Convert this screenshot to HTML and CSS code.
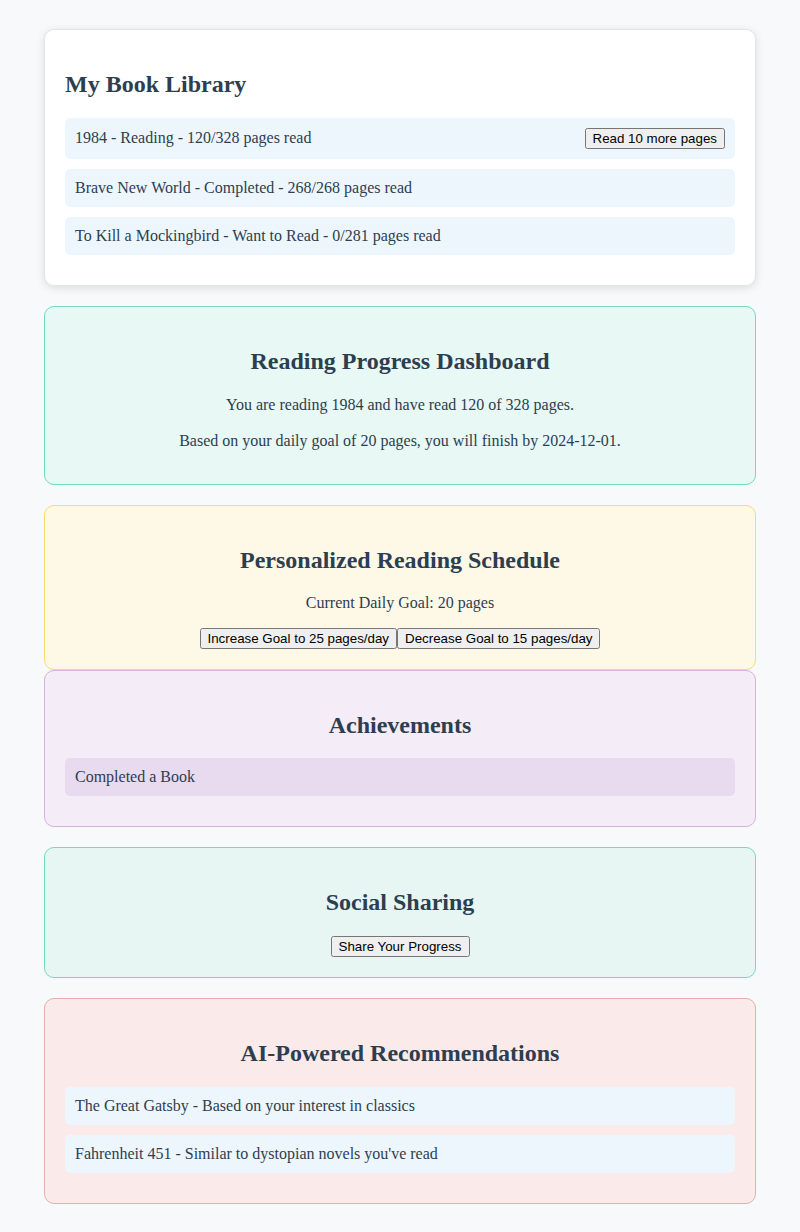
FILE: index.html
```html
<!DOCTYPE html>
<html lang="en">
<head>
<meta charset="utf-8">
<title>Book Tracker</title>
<link rel="stylesheet" href="styles.css">
</head>
<body>
<main class="app">
  <section class="card card-library">
    <h2>My Book Library</h2>
    <div class="item item-row"><span>1984 - Reading - 120/328 pages read</span><button>Read 10 more pages</button></div>
    <div class="item">Brave New World - Completed - 268/268 pages read</div>
    <div class="item">To Kill a Mockingbird - Want to Read - 0/281 pages read</div>
  </section>
  <section class="card card-dashboard center">
    <h2>Reading Progress Dashboard</h2>
    <p>You are reading 1984 and have read 120 of 328 pages.</p>
    <p>Based on your daily goal of 20 pages, you will finish by 2024-12-01.</p>
  </section>
  <section class="card card-schedule center">
    <h2>Personalized Reading Schedule</h2>
    <p>Current Daily Goal: 20 pages</p>
    <button>Increase Goal to 25 pages/day</button><button>Decrease Goal to 15 pages/day</button>
  </section>
  <section class="card card-achieve center">
    <h2>Achievements</h2>
    <div class="item item-achieve">Completed a Book</div>
  </section>
  <section class="card card-social center">
    <h2>Social Sharing</h2>
    <button>Share Your Progress</button>
  </section>
  <section class="card card-ai center">
    <h2>AI-Powered Recommendations</h2>
    <div class="item">The Great Gatsby - Based on your interest in classics</div>
    <div class="item">Fahrenheit 451 - Similar to dystopian novels you've read</div>
  </section>
</main>
</body>
</html>
```
FILE: styles.css
```css
html, body {
  margin: 0;
  padding: 0;
}
body {
  background: #f7f9fa;
  color: #2c3e50;
  font-family: "Liberation Serif", "Times New Roman", serif;
  font-size: 16px;
}
.app {
  padding: 29px 44px 28px;
}
.card {
  border-radius: 10px;
  padding: 20px;
  margin-bottom: 20px;
  border: 1px solid #ddd;
}
.card h2 {
  font-size: 24px;
  margin: 21px 0 19px;
  line-height: 27.6px;
}
.card p {
  margin: 16px 0;
}
.center {
  text-align: center;
}
.card-library {
  background: #ffffff;
  border-color: #e3e6e8;
  box-shadow: 0 2px 8px rgba(0, 0, 0, 0.12);
}
.card-dashboard {
  background: #e8f8f5;
  border-color: #76d7c4;
}
.card-dashboard p {
  line-height: 22px;
  margin: 14px 0;
}
.card-dashboard p:last-child {
  margin-bottom: 12px;
}
.card-schedule {
  background: #fef9e7;
  border-color: #f7dc6f;
  margin-bottom: 0;
}
.card-achieve {
  background: #f4ecf7;
  border-color: #d2b4de;
}
.card-social {
  background: #e8f6f3;
  border-color: #76d7c4;
}
.card-ai {
  background: #fbeaea;
  border-color: #e6b0aa;
}
.item {
  background: #eef6fd;
  border-radius: 5px;
  padding: 10px;
  margin-bottom: 10px;
  text-align: left;
}
.item-row {
  display: flex;
  justify-content: space-between;
  align-items: center;
}
.item-achieve {
  background: #e8daef;
}
button {
  font-family: "Liberation Sans", Arial, sans-serif;
  font-size: 13.33px;
}
```
